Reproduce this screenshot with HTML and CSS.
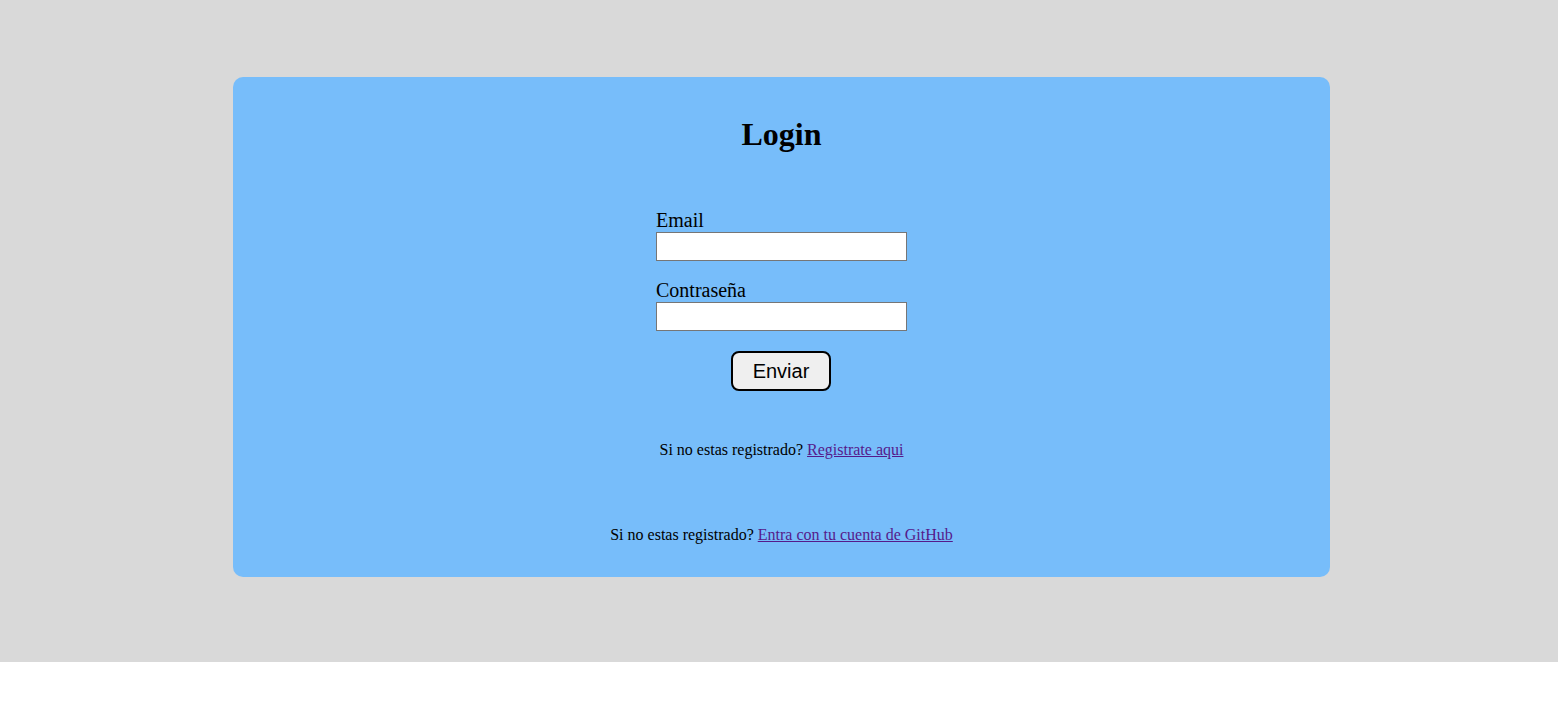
FILE: index.html
```html
<!DOCTYPE html>
<html lang="es">
<head>
<meta charset="utf-8">
<title>Login</title>
<link rel="stylesheet" href="styles.css">
</head>
<body>
<div class="page">
  <div class="card">
    <h1 class="title">Login</h1>
    <form class="form">
      <label class="label" for="email">Email</label>
      <input class="input" id="email" type="email">
      <label class="label second" for="pass">Contraseña</label>
      <input class="input" id="pass" type="password">
      <button class="btn" type="button">Enviar</button>
    </form>
    <p class="note first">Si no estas registrado? <a href="#" class="link">Registrate aqui</a></p>
    <p class="note github">Si no estas registrado? <a href="#" class="link">Entra con tu cuenta de GitHub</a></p>
  </div>
</div>
</body>
</html>
```
FILE: styles.css
```css
html, body {
  margin: 0;
  padding: 0;
  background: #ffffff;
  font-family: "Liberation Serif", "Times New Roman", serif;
}
.page {
  background: #d9d9d9;
  height: 662px;
  box-sizing: border-box;
  padding-top: 77px;
}
.card {
  margin-left: 233px;
  width: 1097px;
  height: 500px;
  box-sizing: border-box;
  background: #77bdfa;
  border-radius: 10px;
  display: flex;
  flex-direction: column;
  align-items: center;
  padding-top: 39px;
}
.title {
  margin: 0;
  font-size: 32px;
  line-height: 37px;
  font-weight: bold;
  color: #000;
}
.form {
  margin-top: 56px;
  width: 251px;
  display: flex;
  flex-direction: column;
}
.label {
  font-size: 20px;
  line-height: 23px;
  color: #000;
}
.label.second { margin-top: 18px; }
.input {
  width: 251px;
  height: 29px;
  box-sizing: border-box;
  border: 1px solid #767676;
  background: #fff;
  margin: 0;
  padding: 0 4px;
}
.btn {
  align-self: flex-start;
  margin-top: 20px;
  margin-left: 75px;
  width: 100px;
  height: 40px;
  box-sizing: border-box;
  border: 2px solid #000;
  border-radius: 8px;
  background: #efefef;
  font-family: "Liberation Sans", Arial, sans-serif;
  font-size: 20px;
  color: #000;
  padding: 0;
}
.note {
  margin: 0;
  font-size: 16px;
  line-height: 18px;
  color: #000;
}
.note.first { margin-top: 50px; }
.note.github { margin-top: 67px; }
.link {
  color: #551a8b;
  text-decoration: underline;
}
```
